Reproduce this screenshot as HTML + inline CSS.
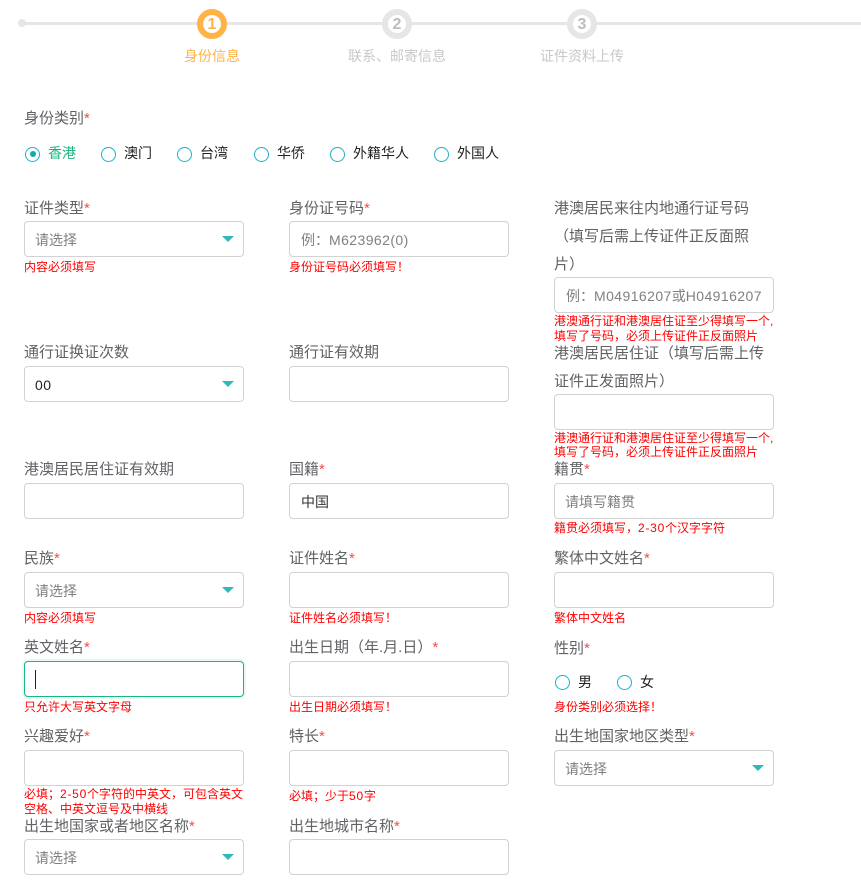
<!DOCTYPE html>
<html lang="zh-CN"><head><meta charset="utf-8"><title>身份信息</title>
<style>
html,body{margin:0;padding:0;background:#fff;width:861px;height:880px;overflow:hidden}
body{position:relative;font-family:"Liberation Sans","Noto Sans CJK SC",sans-serif;font-size:14px}
.a{position:absolute;white-space:nowrap}
.l{position:absolute;white-space:nowrap;color:#606266;font-size:15px;line-height:28px;height:28px;margin-top:1px}
.l i{font-style:normal;color:#f44c4c}
.box{position:absolute;width:218px;height:34px;border:1px solid #d2d2d2;border-radius:4px;background:#fff;line-height:36px;padding:0;color:#808080;font-size:14px;white-space:nowrap}
.box span{position:absolute;left:10px;top:0}
.box u{text-decoration:none;letter-spacing:.42px}
.box b{position:absolute;left:197px;top:14px;width:0;height:0;border-left:6px solid transparent;border-right:6px solid transparent;border-top:6px solid #2fb8bd}
.e{position:absolute;white-space:nowrap;color:#f00;font-size:12px;line-height:15px}
.e u{text-decoration:none;letter-spacing:.75px}
.r{position:absolute;width:15px;height:15px;box-sizing:border-box;border:1.3px solid #1cb0c8;border-radius:50%;top:146.5px}
.t{position:absolute;top:143px;line-height:20px;color:#222;font-size:14px;white-space:nowrap}
.step{position:absolute;top:9px;width:18px;height:18px;border:6px solid #e6e6e6;border-radius:50%;background:#fff;box-sizing:content-box;text-align:center;line-height:20px;font-size:16px;font-weight:bold;color:#bdbdbd}
.sl{position:absolute;top:46px;line-height:20px;font-size:14px;color:#c8c8c8;white-space:nowrap;transform:translateX(-50%)}
</style></head><body>
<div class="a" style="left:22px;top:22px;width:839px;height:3px;background:#e6e6e6"></div>
<div class="a" style="left:18px;top:19px;width:8px;height:8px;border-radius:50%;background:#e6e6e6"></div>
<div class="step" style="left:197px;border-color:#ffb347;color:#ffb347">1</div>
<div class="step" style="left:382px">2</div>
<div class="step" style="left:567px">3</div>
<div class="sl" style="left:212px;color:#ffb347">身份信息</div>
<div class="sl" style="left:397px">联系、邮寄信息</div>
<div class="sl" style="left:582px">证件资料上传</div>

<div class="l" style="left:24px;top:104px">身份类别<i>*</i></div>
<div class="r" style="left:25px"></div><div class="a" style="left:29.5px;top:151px;width:6px;height:6px;border-radius:50%;background:#12a9b5"></div>
<div class="t" style="left:48px;color:#1db57f">香港</div>
<div class="r" style="left:101px"></div><div class="t" style="left:124px">澳门</div>
<div class="r" style="left:177px"></div><div class="t" style="left:200px">台湾</div>
<div class="r" style="left:254px"></div><div class="t" style="left:277px">华侨</div>
<div class="r" style="left:330px"></div><div class="t" style="left:353px">外籍华人</div>
<div class="r" style="left:434px"></div><div class="t" style="left:457px">外国人</div>

<div class="l" style="left:24px;top:194px">证件类型<i>*</i></div>
<div class="box" style="left:24px;top:221px"><span>请选择</span><b></b></div>
<div class="e" style="left:24px;top:260px">内容必须填写</div>
<div class="l" style="left:289px;top:194px">身份证号码<i>*</i></div>
<div class="box" style="left:289px;top:221px"><span style="left:11px">例：<u>M623962(0)</u></span></div>
<div class="e" style="left:289px;top:260px">身份证号码必须填写！</div>
<div class="l" style="left:554px;top:194px">港澳居民来往内地通行证号码</div>
<div class="l" style="left:554px;top:222px">（填写后需上传证件正反面照</div>
<div class="l" style="left:554px;top:250px">片）</div>
<div class="box" style="left:554px;top:277px"><span style="left:11px">例：<u>M04916207</u>或<u>H04916207</u></span></div>
<div class="e" style="left:554px;top:314px">港澳通行证和港澳居住证至少得填写一个,</div>
<div class="e" style="left:554px;top:329px">填写了号码，必须上传证件正反面照片</div>

<div class="l" style="left:24px;top:338px">通行证换证次数</div>
<div class="box" style="left:24px;top:366px;color:#222"><span><u>00</u></span><b></b></div>
<div class="l" style="left:289px;top:338px">通行证有效期</div>
<div class="box" style="left:289px;top:366px"></div>
<div class="l" style="left:554px;top:339px">港澳居民居住证（填写后需上传</div>
<div class="l" style="left:554px;top:367px">证件正发面照片）</div>
<div class="box" style="left:554px;top:394px"></div>
<div class="e" style="left:554px;top:431px">港澳通行证和港澳居住证至少得填写一个,</div>
<div class="e" style="left:554px;top:445px">填写了号码，必须上传证件正反面照片</div>

<div class="l" style="left:24px;top:455px">港澳居民居住证有效期</div>
<div class="box" style="left:24px;top:483px"></div>
<div class="l" style="left:289px;top:455px">国籍<i>*</i></div>
<div class="box" style="left:289px;top:483px;color:#333"><span style="left:11px">中国</span></div>
<div class="l" style="left:554px;top:455px">籍贯<i>*</i></div>
<div class="box" style="left:554px;top:483px"><span>请填写籍贯</span></div>
<div class="e" style="left:554px;top:521px">籍贯必须填写，<u>2-30</u>个汉字字符</div>

<div class="l" style="left:24px;top:544px">民族<i>*</i></div>
<div class="box" style="left:24px;top:572px"><span>请选择</span><b></b></div>
<div class="e" style="left:24px;top:611px">内容必须填写</div>
<div class="l" style="left:289px;top:544px">证件姓名<i>*</i></div>
<div class="box" style="left:289px;top:572px"></div>
<div class="e" style="left:289px;top:611px">证件姓名必须填写！</div>
<div class="l" style="left:554px;top:544px">繁体中文姓名<i>*</i></div>
<div class="box" style="left:554px;top:572px"></div>
<div class="e" style="left:554px;top:611px">繁体中文姓名</div>

<div class="l" style="left:24px;top:633px">英文姓名<i>*</i></div>
<div class="box" style="left:24px;top:661px;border-color:#1db57f;box-shadow:0 0 0 2px #e8f8f2"></div>
<div class="a" style="left:35px;top:670px;width:1px;height:19px;background:#222"></div>
<div class="e" style="left:24px;top:700px">只允许大写英文字母</div>
<div class="l" style="left:289px;top:633px">出生日期（年.月.日）<i>*</i></div>
<div class="box" style="left:289px;top:661px"></div>
<div class="e" style="left:289px;top:700px">出生日期必须填写！</div>
<div class="l" style="left:554px;top:634px">性别<i>*</i></div>
<div class="r" style="left:555px;top:675px"></div><div class="t" style="left:578px;top:672px">男</div>
<div class="r" style="left:617px;top:675px"></div><div class="t" style="left:640px;top:672px">女</div>
<div class="e" style="left:554px;top:700px">身份类别必须选择！</div>

<div class="l" style="left:24px;top:722px">兴趣爱好<i>*</i></div>
<div class="box" style="left:24px;top:750px"></div>
<div class="e" style="left:24px;top:787px">必填；<u>2-50</u>个字符的中英文，可包含英文</div>
<div class="e" style="left:24px;top:802px">空格、中英文逗号及中横线</div>
<div class="l" style="left:289px;top:722px">特长<i>*</i></div>
<div class="box" style="left:289px;top:750px"></div>
<div class="e" style="left:289px;top:789px">必填；少于<u>50</u>字</div>
<div class="l" style="left:554px;top:722px">出生地国家地区类型<i>*</i></div>
<div class="box" style="left:554px;top:750px"><span>请选择</span><b></b></div>

<div class="l" style="left:24px;top:812px">出生地国家或者地区名称<i>*</i></div>
<div class="box" style="left:24px;top:839px"><span>请选择</span><b></b></div>
<div class="l" style="left:289px;top:812px">出生地城市名称<i>*</i></div>
<div class="box" style="left:289px;top:839px"></div>
</body></html>
